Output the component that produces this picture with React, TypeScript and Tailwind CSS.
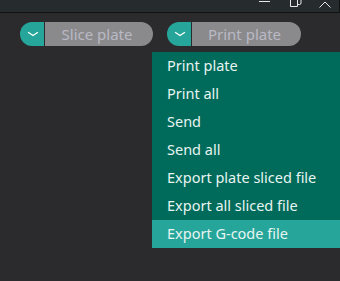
const items = [
  "Print plate",
  "Print all",
  "Send",
  "Send all",
  "Export plate sliced file",
  "Export all sliced file",
  "Export G-code file",
];

function Chevron() {
  return (
    <svg width="12" height="6" viewBox="0 0 12 6" fill="none">
      <path d="M1.5 1.5 L6 4.5 L10.5 1.5" stroke="#ffffff" strokeWidth="1.3" strokeLinecap="round" />
    </svg>
  );
}

function SplitButton({ label, width }: { label: string; width: string }) {
  return (
    <div className="flex h-6 items-stretch">
      <div className="flex w-[24px] items-center justify-center rounded-l-full bg-[#26a69a] pl-[2px]">
        <Chevron />
      </div>
      <div
        className={`ml-px flex items-center justify-center rounded-r-full bg-[#8a8a8c] pr-1 text-[15px] text-[#b9b9c4] ${width}`}
      >
        {label}
      </div>
    </div>
  );
}

export default function App() {
  return (
    <div
      className="flex h-[281px] w-[340px] flex-col overflow-hidden bg-[#2b2b2e]"
      style={{ fontFamily: '"Noto Sans", sans-serif' }}
    >
      <div className="relative h-[13px] shrink-0 border-b border-r border-[#111214] bg-[#262b2d]">
        <div className="absolute left-[259px] top-[1px] h-[1px] w-[11px] bg-[#e6e6e6]" />
        <svg className="absolute left-[289px] top-0" width="13" height="8" viewBox="0 0 13 8" fill="none">
          <path d="M1.5 0 V6.5 H8.5 V0" stroke="#e6e6e6" strokeWidth="1" />
          <path d="M8.5 4.5 H10.5 a1.5 1.5 0 0 0 1.5 -1.5 V0" stroke="#e6e6e6" strokeWidth="1" />
        </svg>
        <svg className="absolute left-[319px] top-[1px]" width="12" height="7" viewBox="0 0 12 7" fill="none">
          <path d="M0.5 6.5 L6 1 L11.5 6.5" stroke="#e6e6e6" strokeWidth="1" />
        </svg>
      </div>
      <div className="flex gap-[14px] pl-[20px] pt-[9px]">
        <SplitButton label="Slice plate" width="w-[108px]" />
        <SplitButton label="Print plate" width="w-[109px]" />
      </div>
      <div className="ml-[152px] mt-[6px] flex w-[200px] flex-col bg-[#006b5a]">
        {items.map((item, i) => (
          <div
            key={item}
            className={`flex h-[28px] items-center pl-[15px] text-[14.5px] text-[#e8f4f1] ${
              i === items.length - 1 ? "bg-[#26a69a]" : ""
            }`}
          >
            {item}
          </div>
        ))}
      </div>
    </div>
  );
}
